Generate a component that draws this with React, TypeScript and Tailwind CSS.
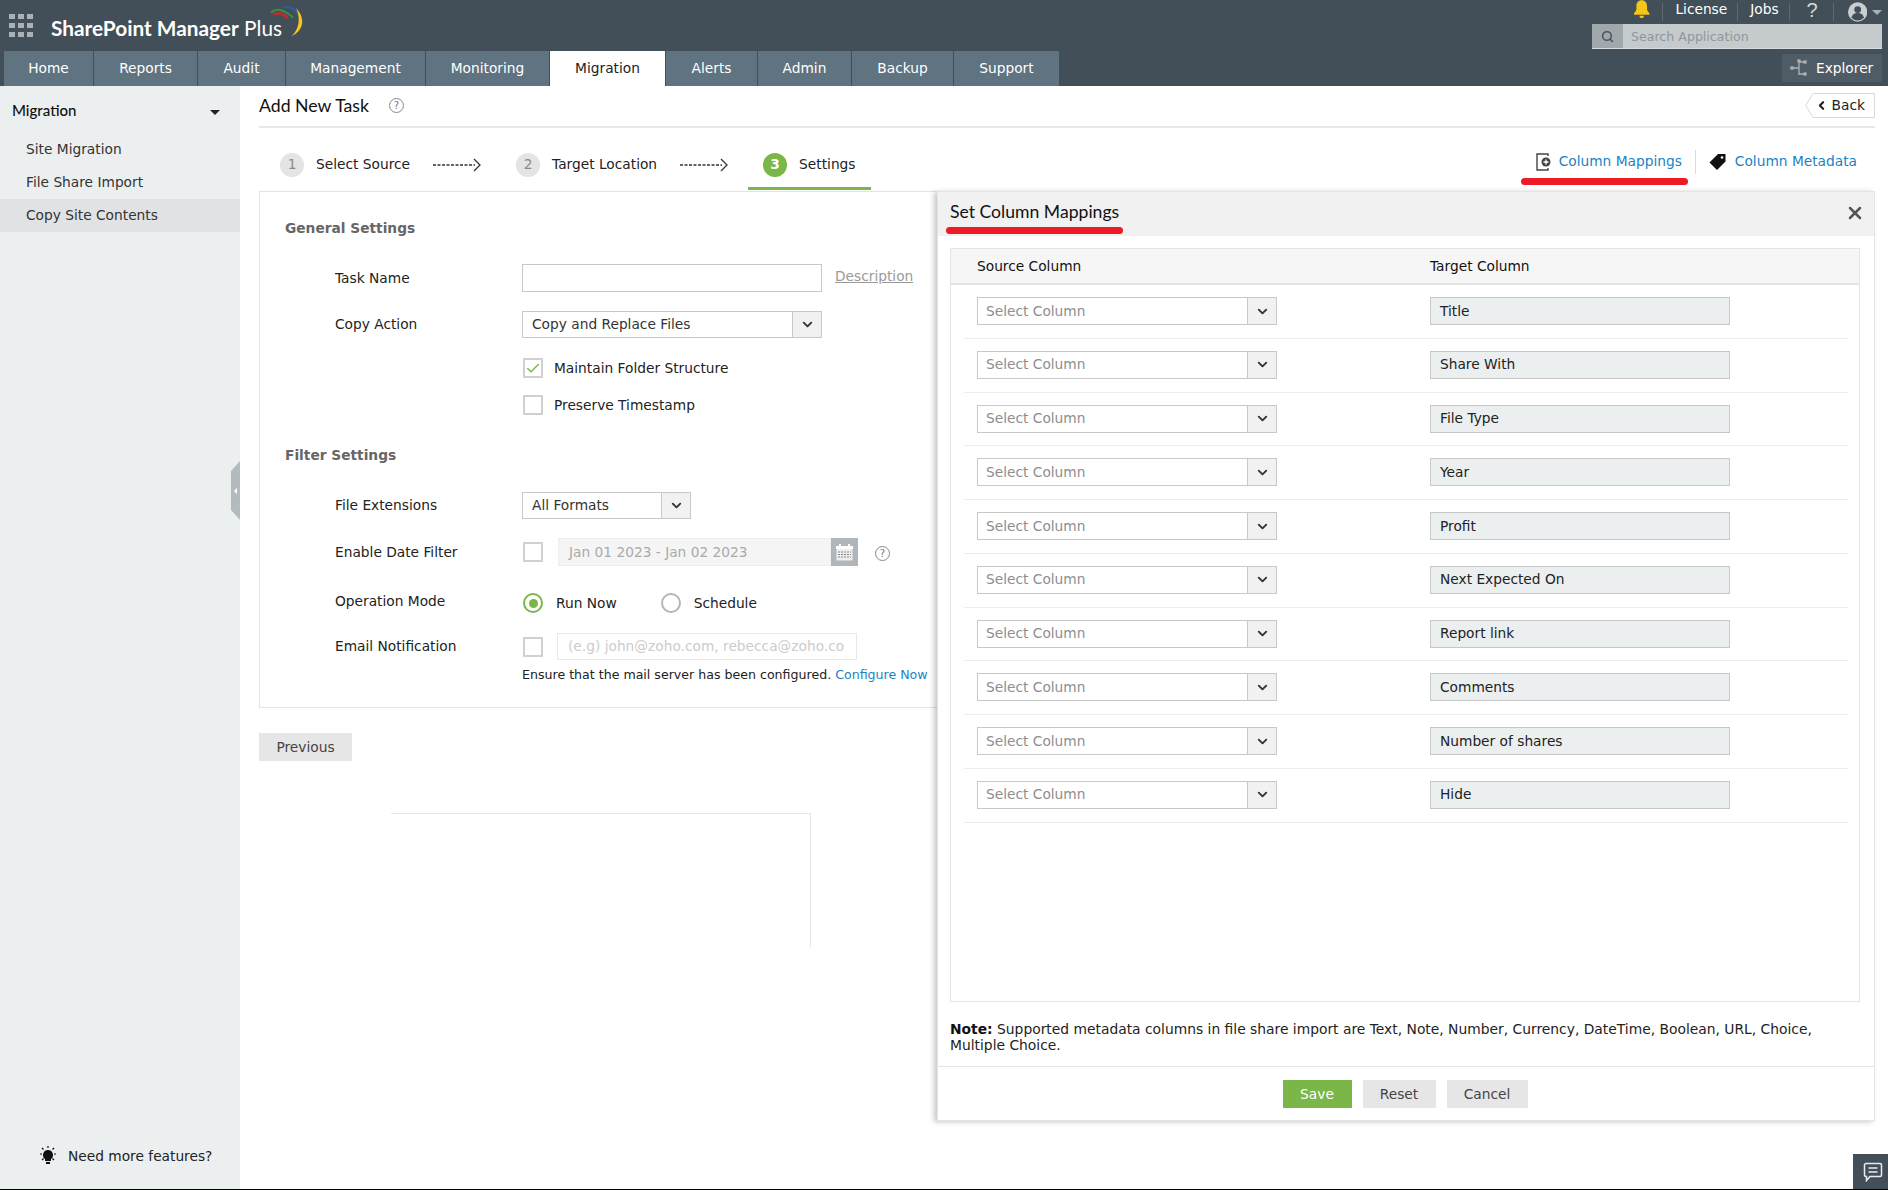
import React from "react";
import { ChevronDown, ChevronLeft, Search, X, Check } from "lucide-react";

const tabs: [string, number][] = [
  ["Home", 90], ["Reports", 104], ["Audit", 88], ["Management", 140], ["Monitoring", 124],
  ["Migration", 116], ["Alerts", 92], ["Admin", 94], ["Backup", 102], ["Support", 106],
];
const targets = ["Title", "Share With", "File Type", "Year", "Profit", "Next Expected On", "Report link", "Comments", "Number of shares", "Hide"];

function Select({ text, w, h, arrow = 29, muted = false }: { text: string; w: number; h: number; arrow?: number; muted?: boolean }) {
  return (
    <div style={{ width: w, height: h }} className="flex border border-[#c8c8c8] bg-white">
      <div className={`flex-1 flex items-center ${muted ? "pl-[8px] text-[#8e8e8e]" : "pl-[9px] text-[#333]"}`}>{text}</div>
      <div style={{ width: arrow }} className="flex items-center justify-center border-l border-[#c8c8c8] bg-[#f1f1f1]">
        <ChevronDown size={15} strokeWidth={3} className="text-[#333]" />
      </div>
    </div>
  );
}

function Box({ children }: { children?: React.ReactNode }) {
  return <div className="w-5 h-5 shrink-0 border-2 border-[#d0d0d0] bg-white flex items-center justify-center">{children}</div>;
}

function Help() {
  return <div className="w-[15px] h-[15px] rounded-full border border-[#888] text-[#777] text-[10px] leading-[13px] text-center">?</div>;
}

function Step({ n, label, active }: { n: number; label: string; active?: boolean }) {
  return (
    <div className="flex items-center">
      <div className={`w-6 h-6 rounded-full flex items-center justify-center ${active ? "bg-[#7ab648] text-white font-bold" : "bg-[#e4e4e4] text-[#8a8a8a]"}`}>{n}</div>
      <span className="ml-[12px] text-[#222]">{label}</span>
    </div>
  );
}

function Arrow() {
  return (
    <svg width="48" height="14" viewBox="0 0 48 14" className="ml-[23px] mr-[35px]">
      <path d="M0 7H42" stroke="#333" strokeWidth="1.500" strokeDasharray="3 1.500" />
      <path d="M41 1l6 6-6 6" stroke="#333" strokeWidth="1.300" fill="none" />
    </svg>
  );
}

export default function App() {
  return (
    <div className="relative w-[1888px] h-[1190px] overflow-hidden bg-white flex flex-col border-b border-black text-[13.75px] text-[#222] font-['DejaVu_Sans',sans-serif]">
      {/* header */}
      <header className="h-[86px] shrink-0 bg-[#434f58] flex justify-between">
        <div className="flex flex-col">
          <div className="h-[51px] flex items-center pl-[9px] pb-[4px]">
            <svg width="24" height="24" viewBox="0 0 24 24" fill="#a9b1b6" className="mt-[3px]">
              <rect x="0" y="1" width="6" height="5" /><rect x="9" y="1" width="6" height="5" /><rect x="18" y="1" width="6" height="5" />
              <rect x="0" y="10" width="6" height="5" /><rect x="9" y="10" width="6" height="5" /><rect x="18" y="10" width="6" height="5" />
              <rect x="0" y="19" width="6" height="5" /><rect x="9" y="19" width="6" height="5" /><rect x="18" y="19" width="6" height="5" />
            </svg>
            <div className="ml-[18px] mt-[9px] text-white text-[20.800px] whitespace-nowrap font-['Lato',sans-serif]">
              <span className="font-bold">SharePoint Manager</span> <span>Plus</span>
            </div>
            <svg width="34" height="34" viewBox="0 0 34 34" fill="none" className="-ml-[13px] -mt-[8px]">
              <path d="M4 11.500Q12 8 19 15.500" stroke="#d2232a" strokeWidth="2" />
              <path d="M2 9.500Q10 2 24 14.500" stroke="#3a8f3f" strokeWidth="2" />
              <path d="M15 4.500Q22 2 29 10.500" stroke="#2a5fa8" strokeWidth="2" />
              <path d="M27 5C36 14 36 27 22 33.500C30 27 32 15 27 5Z" fill="#f2c81e" />
            </svg>
          </div>
          <nav className="h-[35px] flex pl-1">
            {tabs.map(([t, w]) => (
              <div key={t} style={{ width: w }} className={`flex items-center justify-center border-r border-[#434f58] ${t === "Migration" ? "bg-white text-[#222]" : "bg-[#5f7380] text-white"}`}>{t}</div>
            ))}
          </nav>
        </div>
        <div className="w-[296px] pr-[6px] flex flex-col items-end">
          <div className="h-[24px] w-full flex items-center text-white pl-[41px]">
            <svg width="18" height="19" viewBox="0 0 18 19" fill="#f5c518" className="-mt-[6px]"><path d="M9 0c3.500 0 5.500 2.500 5.500 6v4l2.500 3.500V15H1v-1.500L3.500 10V6C3.500 2.500 5.500 0 9 0z" /><path d="M6.500 16h5a2.500 2.500 0 0 1-5 0z" /></svg>
            <div className="ml-[12px] h-[18px] w-px bg-[#5d6972]" />
            <span className="ml-[12px] -mt-[6px]">License</span>
            <div className="ml-[10px] h-[18px] w-px bg-[#5d6972]" />
            <span className="ml-[12px] -mt-[6px]">Jobs</span>
            <div className="ml-[10px] h-[18px] w-px bg-[#5d6972]" />
            <span className="ml-[17px] -mt-[4px] text-[#d5d9dc] text-[20px] font-['Liberation_Sans',sans-serif]">?</span>
            <div className="ml-[15px] h-[18px] w-px bg-[#5d6972]" />
            <svg width="20" height="20" viewBox="0 0 20 20" className="ml-[14px] -mt-[1px]"><circle cx="10" cy="10" r="10" fill="#c9ced1" /><circle cx="10" cy="7.500" r="3.500" fill="#434f58" /><path d="M3.500 16c1-4 3.500-5 6.500-5s5.500 1 6.500 5a9 9 0 0 1-13 0z" fill="#434f58" /></svg>
            <div className="ml-[5px] w-0 h-0 border-x-[5px] border-x-transparent border-t-[5px] border-t-[#a9b1b6]" />
          </div>
          <div className="h-[25px] w-[290px] flex bg-[#c5cacd] border-b border-[#d9dcde]">
            <div className="w-[31px] bg-[#a0a8ac] flex items-center justify-center"><Search size={13} strokeWidth={3} className="text-[#4c5860]" /></div>
            <span className="ml-[8px] mt-[3px] self-center text-[12.600px] text-[#8f979b]">Search Application</span>
          </div>
          <div className="mt-[5px] h-[28px] w-[100px] bg-[#505c65] flex items-center text-white pl-[8px]">
            <svg width="18" height="18" viewBox="0 0 18 18" fill="none" stroke="#a9b1b6" strokeWidth="1.300"><path d="M9 2v14M9 3h6M9 9H2M9 15h6" /><rect x="8" y="1" width="2" height="2" fill="#a9b1b6" /><rect x="14" y="2" width="2" height="2" fill="#a9b1b6" /><rect x="14" y="14" width="2" height="2" fill="#a9b1b6" /><rect x="1" y="8" width="2" height="2" fill="#a9b1b6" /></svg>
            <span className="ml-[8px]">Explorer</span>
          </div>
        </div>
      </header>

      <div className="flex-1 flex min-h-0">
        {/* sidebar */}
        <aside className="w-[240px] shrink-0 bg-[#ebeff0] flex flex-col relative">
          <div className="h-[48px] flex items-center justify-between pl-[12px] pr-[20px] text-[15px] font-['Lato',sans-serif] text-[#111] font-medium">
            Migration
            <div className="mt-[5px] w-0 h-0 border-x-[5px] border-x-transparent border-t-[5px] border-t-[#222]" />
          </div>
          <div className="h-[30px] flex items-center pl-[26px] text-[#333]">Site Migration</div>
          <div className="h-[33px] mt-[2px] flex items-center pl-[26px] text-[#333]">File Share Import</div>
          <div className="h-[33px] flex items-center pl-[26px] bg-[#e1e2e3] text-[#333]">Copy Site Contents</div>
          <div className="mt-auto h-[50px] flex items-center pl-[39px] text-[#222] mb-[8px]">
            <svg width="18" height="20" viewBox="0 0 18 20" fill="#111"><path d="M9 4a5 5 0 0 1 3 9v2H6v-2A5 5 0 0 1 9 4z" /><rect x="7" y="16" width="4" height="2" /><path d="M9 0v2M1 8h2M15 8h2M3 2l1.500 1.500M15 2l-1.500 1.500M3 14l1.500-1.500M15 14l-1.500-1.500" stroke="#111" strokeWidth="1.200" /></svg>
            <span className="ml-[11px]">Need more features?</span>
          </div>
          <div className="absolute right-0 top-[375px] w-[9px] h-[59px] bg-[#b4bbbf] [clip-path:polygon(0_10px,100%_0,100%_100%,0_calc(100%-10px))] flex items-center justify-center">
            <div className="w-0 h-0 border-y-[3px] border-y-transparent border-r-[3px] border-r-white" />
          </div>
        </aside>

        {/* main */}
        <main className="flex-1 pl-[19px] pr-[13px] min-w-0">
          <div className="h-[42px] border-b-2 border-[#e8e8e8] flex items-center justify-between">
            <div className="flex items-center">
              <span className="text-[17.700px] text-[#111] font-['Lato',sans-serif]">Add New Task</span>
              <span className="ml-[20px]"><Help /></span>
            </div>
            <div className="relative w-[70px] h-[25px] flex items-center justify-end pr-[10px] text-[#222] mb-[1px]">
              <svg width="70" height="25" viewBox="0 0 70 25" className="absolute inset-0"><path d="M8 .5H69.500V24.500H8L.8 12.500z" fill="#fff" stroke="#d8d8d8" /></svg>
              <ChevronLeft size={13} strokeWidth={4} className="relative mr-[4px] text-[#222]" />
              <span className="relative">Back</span>
            </div>
          </div>
          <div className="h-[63px] pt-[10px] flex items-center justify-between">
            <div className="flex items-center pl-[21px]">
              <Step n={1} label="Select Source" />
              <Arrow />
              <Step n={2} label="Target Location" />
              <Arrow />
              <div className="relative flex items-center">
                <Step n={3} label="Settings" active />
                <div className="absolute left-[-15px] right-[-15px] top-[34px] h-[3px] bg-[#7ab648]" />
              </div>
            </div>
            <div className="flex items-center text-[#1a83c4] pr-[18px] -mt-[6px]">
              <svg width="15" height="18" viewBox="0 0 15 18" fill="none"><path d="M12 3V1H1v16h11v-2" stroke="#444" strokeWidth="1.400" /><circle cx="10" cy="9" r="4.500" fill="#444" /><path d="M10 6.500v5M7.500 9h5" stroke="#fff" strokeWidth="1.300" /></svg>
              <span className="ml-[8px]">Column Mappings</span>
              <div className="mx-[13px] h-[24px] w-px bg-[#dcdcdc]" />
              <svg width="17" height="16" viewBox="0 0 17 16" fill="#111"><path d="M9 0h7.500v7.500L8 16 .5 8.500z" /><circle cx="13" cy="3.500" r="1.300" fill="#fff" /></svg>
              <span className="ml-[9px]">Column Metadata</span>
            </div>
          </div>
          {/* form */}
          <section className="w-[720px] h-[517px] border-y border-l border-[#e3e3e3] pl-[25px]">
            <h3 className="mt-[24px] h-[24px] leading-[24px] font-bold text-[#666]">General Settings</h3>
            <div className="mt-[24px] h-[28px] flex items-center pl-[50px]">
              <label className="w-[187px]">Task Name</label>
              <div className="w-[300px] h-[28px] border border-[#c8c8c8]" />
              <a className="ml-[13px] text-[#9a9a9a] underline -mt-[3px]">Description</a>
            </div>
            <div className="mt-[19px] h-[27px] flex items-center pl-[50px]">
              <label className="w-[187px]">Copy Action</label>
              <Select text="Copy and Replace Files" w={300} h={27} />
            </div>
            <div className="mt-[20px] h-5 flex items-center pl-[238px]">
              <Box><Check size={17} strokeWidth={2} className="text-[#7ab648]" /></Box>
              <span className="ml-[11px]">Maintain Folder Structure</span>
            </div>
            <div className="mt-[17px] h-5 flex items-center pl-[238px]">
              <Box />
              <span className="ml-[11px]">Preserve Timestamp</span>
            </div>
            <h3 className="mt-[28px] h-[24px] leading-[24px] font-bold text-[#666]">Filter Settings</h3>
            <div className="mt-[25px] h-[27px] flex items-center pl-[50px]">
              <label className="w-[187px]">File Extensions</label>
              <Select text="All Formats" w={169} h={27} />
            </div>
            <div className="mt-[19px] h-[28px] flex items-center pl-[50px]">
              <label className="w-[188px]">Enable Date Filter</label>
              <Box />
              <div className="ml-[15px] w-[273px] h-[28px] bg-[#f5f5f5] border border-[#eeeeee] flex items-center pl-[10px] text-[#aaa]">Jan 01 2023 - Jan 02 2023</div>
              <div className="w-[27px] h-[28px] bg-[#b0b6ba] flex items-center justify-center">
                <svg width="17" height="17" viewBox="0 0 17 17" fill="none"><rect x=".5" y="2.500" width="16" height="14" fill="#eee" /><rect x="0" y="2" width="17" height="3" fill="#fff" /><rect x="3" y="0" width="2" height="4" fill="#fff" /><rect x="12" y="0" width="2" height="4" fill="#fff" /><path d="M2 8h13M2 10.500h13M2 13h13" stroke="#888" strokeWidth="1.200" strokeDasharray="2 1" /></svg>
              </div>
              <span className="ml-[17px] mt-[2px]"><Help /></span>
            </div>
            <div className="mt-[27px] h-[20px] flex items-center pl-[50px]">
              <label className="w-[188px] -mt-[3px]">Operation Mode</label>
              <div className="w-5 h-5 rounded-full border-2 border-[#7ab648] flex items-center justify-center"><div className="w-[9px] h-[9px] rounded-full bg-[#7ab648]" /></div>
              <span className="ml-[13px]">Run Now</span>
              <div className="ml-[44px] w-5 h-5 rounded-full border-2 border-[#b5b5b5]" />
              <span className="ml-[13px]">Schedule</span>
            </div>
            <div className="mt-[20px] h-[27px] flex items-center pl-[50px]">
              <label className="w-[188px]">Email Notification</label>
              <Box />
              <div className="ml-[14px] w-[300px] h-[27px] border border-[#e8e8e8] flex items-center pl-[10px] text-[#ccc] overflow-hidden whitespace-nowrap">(e.g) john@zoho.com, rebecca@zoho.co</div>
            </div>
            <div className="mt-[7px] ml-[237px] h-4 leading-4 text-[12.600px] whitespace-nowrap">
              Ensure that the mail server has been configured. <span className="text-[#1a83c4]">Configure Now</span>
            </div>
          </section>
          <button className="mt-[25px] w-[93px] h-[28px] bg-[#e6e6e6] text-[#444]">Previous</button>
        </main>
      </div>

      {/* stray frame lines */}
      <div className="absolute left-[391px] top-[813px] w-[420px] h-[134px] border-t border-r border-[#e6e6e6]" />

      {/* mapping drawer */}
      <div className="absolute left-[937px] top-[191px] w-[938px] h-[930px] bg-white border border-[#e4e4e4] shadow-[-3px_1px_5px_rgba(0,0,0,0.22)] flex flex-col">
        <div className="h-[44px] shrink-0 bg-[#f1f1f1] flex items-center justify-between pl-[12px] pr-[9px]">
          <span className="text-[17.600px] text-[#111] font-['Lato',sans-serif] -mt-[4px]">Set Column Mappings</span>
          <X size={20} strokeWidth={3} className="text-[#555] -mt-[2px]" />
        </div>
        <div className="mt-[12px] ml-[12px] mr-[14px] h-[754px] shrink-0 border border-[#e4e4e4] flex flex-col">
          <div className="h-[36px] shrink-0 bg-[#f6f6f6] border-b-2 border-[#e4e4e4] flex items-center pl-[26px]">
            <span className="w-[453px] text-[#111]">Source Column</span>
            <span className="text-[#111]">Target Column</span>
          </div>
          <div className="ml-[13px] mr-[11px] flex flex-col">
            {targets.map((t) => (
              <div key={t} className="h-[53.750px] border-b border-[#ececec] flex items-start pt-[12px] pl-[13px]">
                <Select text="Select Column" w={300} h={28} muted />
                <div className="ml-[153px] w-[300px] h-[28px] bg-[#ebeff0] border border-[#c8c8c8] flex items-center pl-[9px] text-[#222]">{t}</div>
              </div>
            ))}
          </div>
        </div>
        <p className="mt-[19px] mx-[12px] h-[32px] leading-[16px] text-[13.850px] text-[#222]"><b className="text-[#111]">Note:</b>{" "}<span>Supported metadata columns in file share import are Text, Note, Number, Currency, DateTime, Boolean, URL, Choice, Multiple Choice.</span></p>
        <div className="mt-[13px] border-t border-[#e4e4e4] flex-1 flex items-start justify-center gap-[11px] pt-[13px] pr-[2px]">
          <button className="w-[69px] h-[28px] bg-[#7ab648] text-white">Save</button>
          <button className="w-[73px] h-[28px] bg-[#e6e6e6] text-[#444]">Reset</button>
          <button className="w-[81px] h-[28px] bg-[#e6e6e6] text-[#444]">Cancel</button>
        </div>
      </div>

      {/* red annotations */}
      <div className="absolute left-[1521px] top-[178px] w-[167px] h-[7px] rounded-full bg-[#ed1c24]" />
      <div className="absolute left-[946px] top-[227px] w-[177px] h-[7px] rounded-full bg-[#ed1c24]" />

      {/* chat */}
      <div className="absolute right-0 bottom-0 w-[35px] h-[35px] bg-[#434f58] flex items-center justify-center pl-[5px]">
        <svg width="20" height="20" viewBox="0 0 20 20" fill="none" stroke="#e8ecee" strokeWidth="1.500"><path d="M3 1.500h14a1.500 1.500 0 0 1 1.500 1.500v10a1.500 1.500 0 0 1-1.500 1.500H7l-3.500 4v-4H3A1.500 1.500 0 0 1 1.500 13V3A1.500 1.500 0 0 1 3 1.500z" /><path d="M5.500 6h9M5.500 10h9" /></svg>
      </div>
    </div>
  );
}
